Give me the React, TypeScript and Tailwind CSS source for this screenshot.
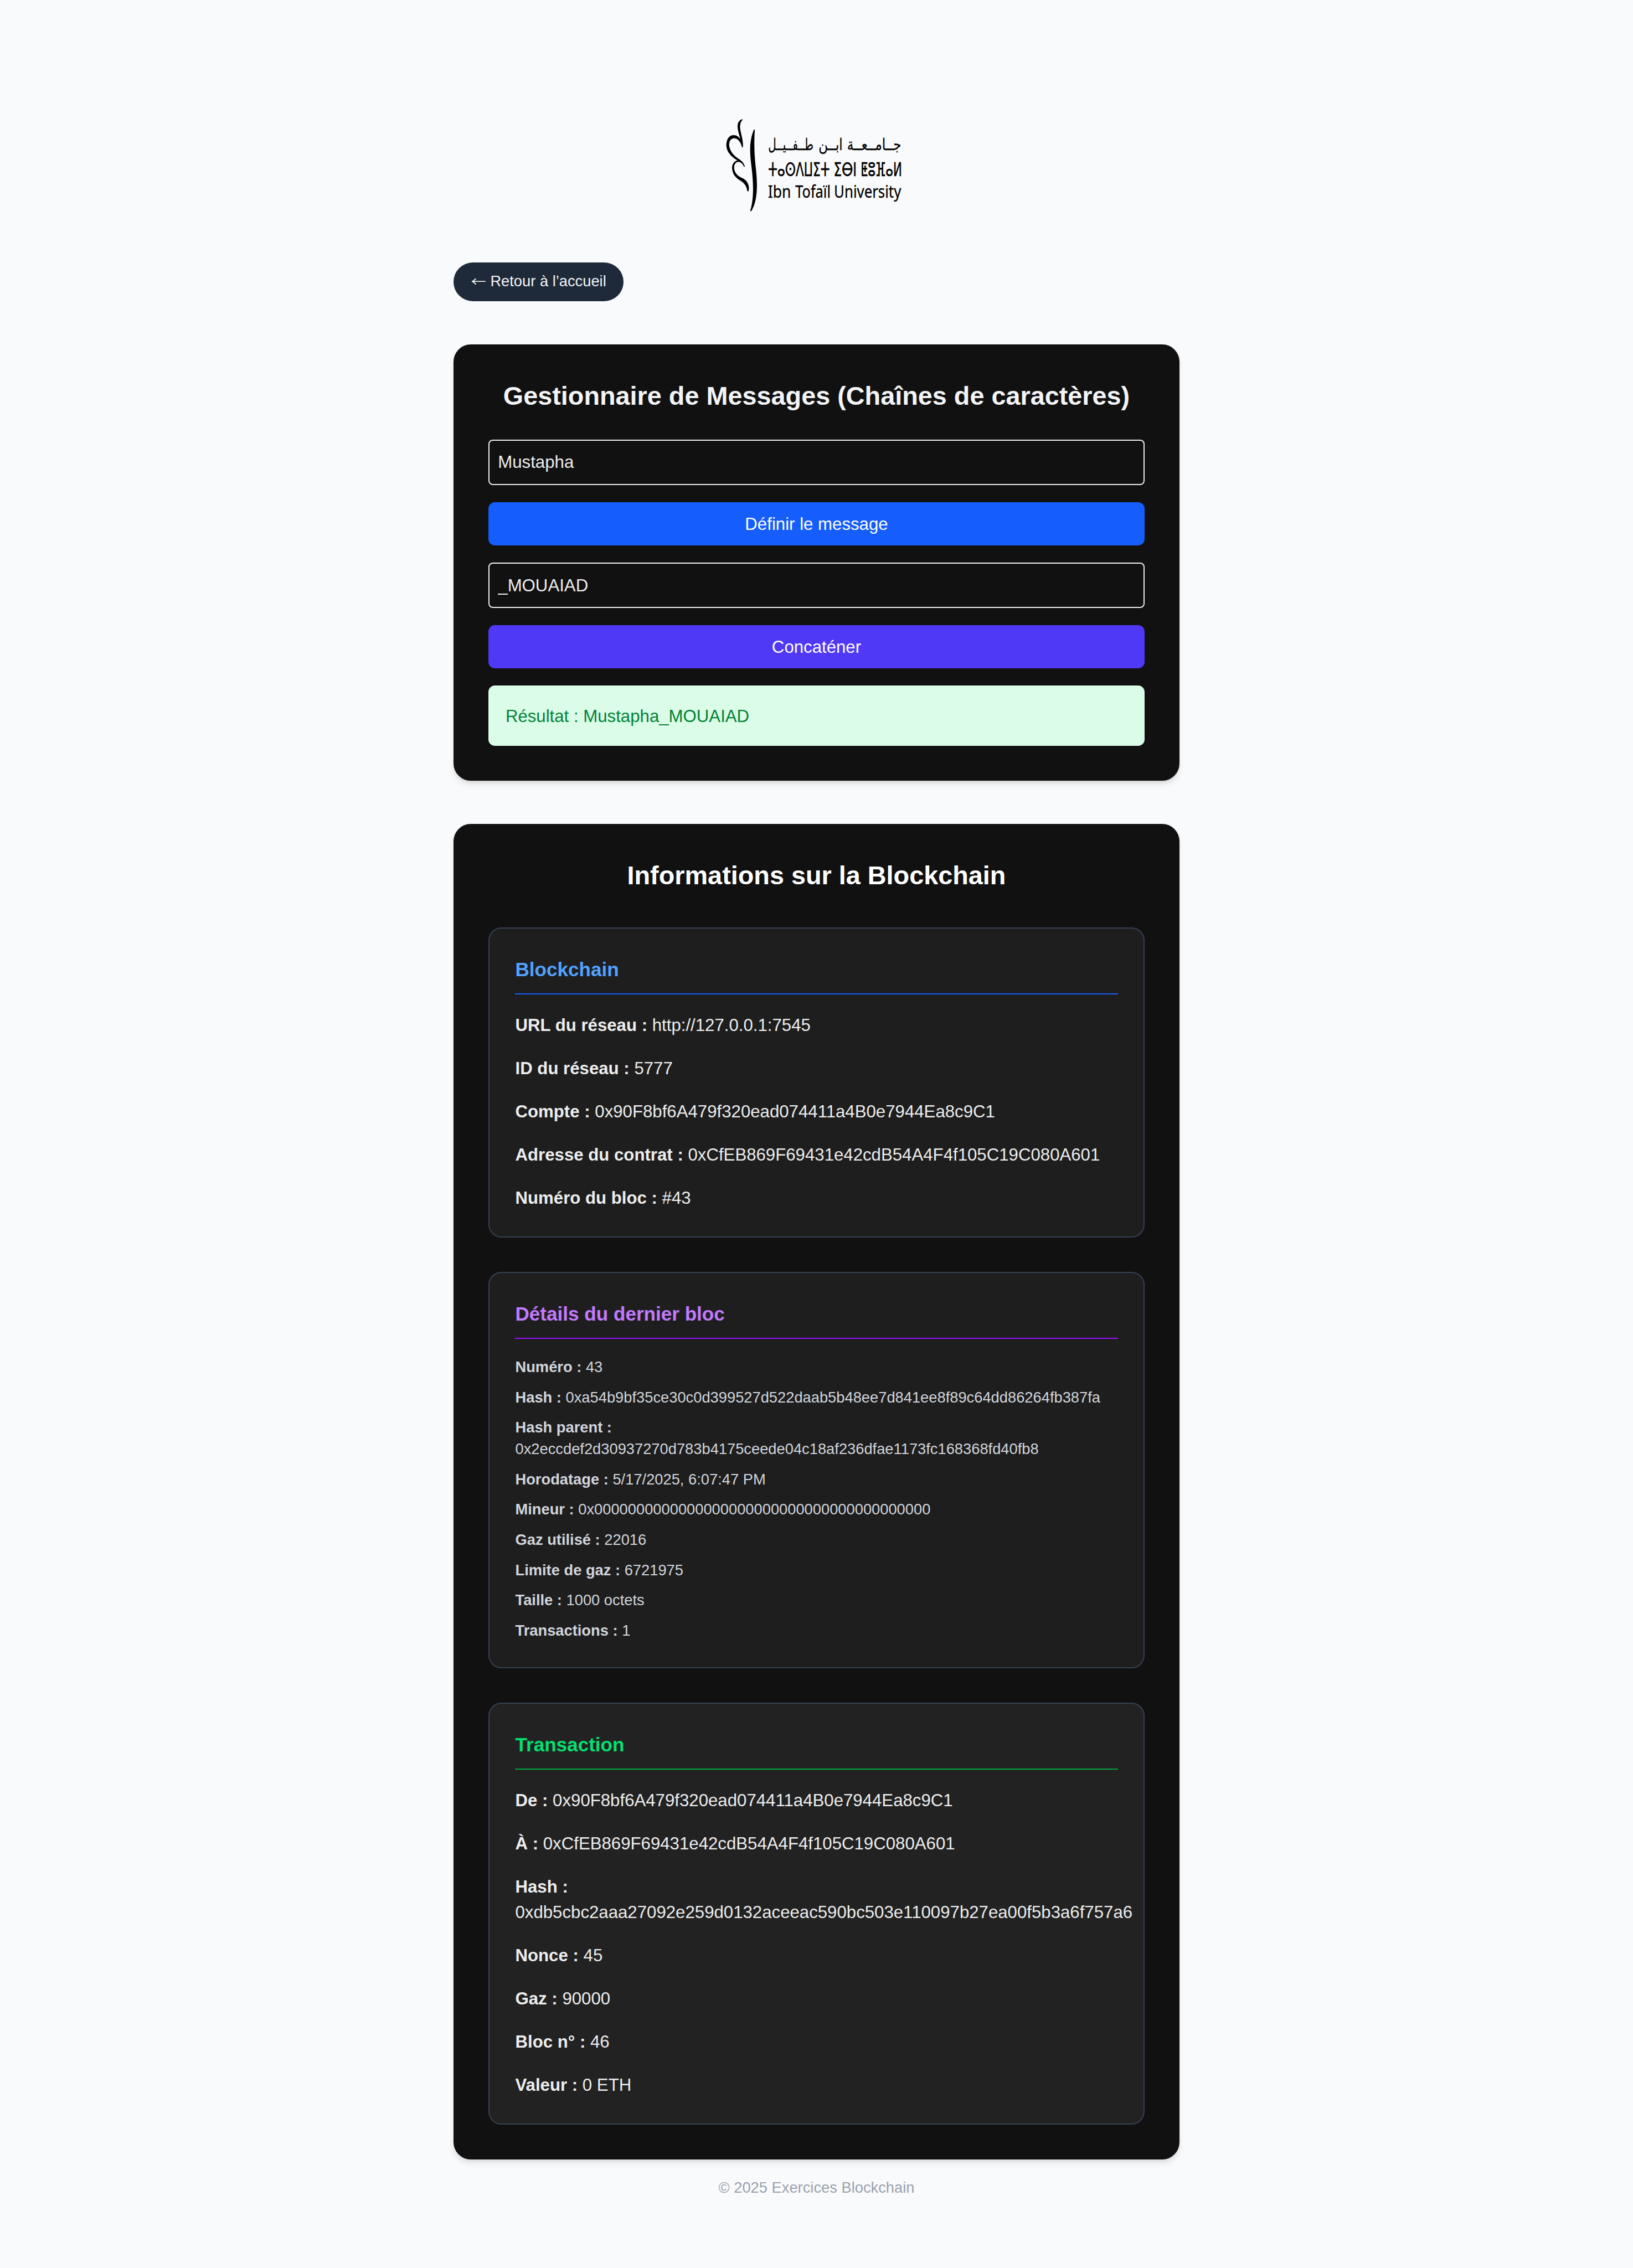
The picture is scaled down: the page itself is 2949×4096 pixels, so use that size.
import type { ReactNode } from "react";

const arabicWords = [
  { x: 1048, width: 301, text: "جــامــعــة" },
  { x: 722, width: 134, text: "ابــن" },
  { x: 560, width: 252, text: "طــفــيــل" },
];

const tifinaghWords = [
  { x: 308, width: 342, text: "ⵜⴰⵙⴷⵡⵉⵜ" },
  { x: 672, width: 128, text: "ⵉⴱⵏ" },
  { x: 822, width: 230, text: "ⵟⵓⴼⴰⵍ" },
];

const latinWords = [
  { x: 307, width: 128, text: "Ibn" },
  { x: 459, width: 196, text: "Tofaïl" },
  { x: 674, width: 373, text: "University" },
];

function Logo() {
  return (
    <svg viewBox="6 0 1140 630" className="h-[105px] w-[190px] overflow-visible" fill="#000">
      <path d="M164 62 C142 68 134 92 140 120 C143 140 150 155 154 174 C142 152 114 144 95 158 C74 176 70 212 84 240 C95 262 115 278 137 291 C112 300 103 322 110 350 C117 382 140 394 160 408 C180 422 190 440 192 462 L199 463 C207 430 192 403 166 390 C145 380 128 370 121 345 C115 320 124 301 142 299 C156 300 168 311 174 327 L179 325 C172 302 156 290 140 280 C115 262 97 240 92 212 C88 182 105 165 125 169 C145 173 157 195 163 219 L168 218 C170 190 163 165 157 138 C149 106 150 80 166 66 Z" />
      <path d="M229 119 L234 121 C230 180 230 240 238 320 C250 420 252 510 215 573 L208 573 C228 510 228 430 216 330 C204 240 204 180 229 119 Z" />
      <g fontFamily="'DejaVu Sans', sans-serif" fontSize="90" stroke="#000" strokeWidth="1">
        {arabicWords.map((w) => (
          <text key={w.text} x={w.x} y="234" direction="rtl" textLength={w.width} lengthAdjust="spacingAndGlyphs">
            {w.text}
          </text>
        ))}
      </g>
      <g fontFamily="'DejaVu Sans', sans-serif" fontSize="104" stroke="#000" strokeWidth="2">
        {tifinaghWords.map((w) => (
          <text key={w.text} x={w.x} y="379" textLength={w.width} lengthAdjust="spacingAndGlyphs">
            {w.text}
          </text>
        ))}
      </g>
      <g fontFamily="'Noto Sans', sans-serif" fontSize="96" stroke="#000" strokeWidth="1">
        {latinWords.map((w) => (
          <text key={w.text} x={w.x} y="499" textLength={w.width} lengthAdjust="spacingAndGlyphs">
            {w.text}
          </text>
        ))}
      </g>
    </svg>
  );
}

function Row({ label, children }: { label: string; children: ReactNode }) {
  return (
    <p>
      <strong className="font-semibold">{label} :</strong> {children}
    </p>
  );
}

const blockchain = [
  ["URL du réseau", "http://127.0.0.1:7545"],
  ["ID du réseau", "5777"],
  ["Compte", "0x90F8bf6A479f320ead074411a4B0e7944Ea8c9C1"],
  ["Adresse du contrat", "0xCfEB869F69431e42cdB54A4F4f105C19C080A601"],
  ["Numéro du bloc", "#43"],
];

const lastBlock = [
  ["Numéro", "43"],
  ["Hash", "0xa54b9bf35ce30c0d399527d522daab5b48ee7d841ee8f89c64dd86264fb387fa"],
  ["Hash parent", "0x2eccdef2d30937270d783b4175ceede04c18af236dfae1173fc168368fd40fb8"],
  ["Horodatage", "5/17/2025, 6:07:47 PM"],
  ["Mineur", "0x0000000000000000000000000000000000000000"],
  ["Gaz utilisé", "22016"],
  ["Limite de gaz", "6721975"],
  ["Taille", "1000 octets"],
  ["Transactions", "1"],
];

const transaction = [
  ["De", "0x90F8bf6A479f320ead074411a4B0e7944Ea8c9C1"],
  ["À", "0xCfEB869F69431e42cdB54A4F4f105C19C080A601"],
  ["Hash", "0xdb5cbc2aaa27092e259d0132aceeac590bc503e110097b27ea00f5b3a6f757a6"],
  ["Nonce", "45"],
  ["Gaz", "90000"],
  ["Bloc n°", "46"],
  ["Valeur", "0 ETH"],
];

export default function App() {
  return (
    <div className="flex h-[2100.5px] w-full flex-col items-center overflow-hidden bg-gray-50 pt-[100px] font-['Liberation_Sans',Arial,sans-serif] text-base text-[#ededed] [zoom:1.95]">
      <Logo />
      <main className="mt-[38px] flex w-2xl flex-col gap-10">
        <a className="self-start rounded-full bg-gray-800 px-4 py-2 text-sm text-gray-100">
          <span className="inline-block translate-y-px scale-y-85 font-['Noto_Sans_CJK_JP',sans-serif] leading-none">←</span>{" "}
          Retour à l’accueil
        </a>

        <section className="rounded-2xl bg-[#111] p-8 shadow-md">
          <h2 className="mb-6 text-center text-2xl font-bold text-gray-100">
            Gestionnaire de Messages (Chaînes de caractères)
          </h2>
          <div className="flex flex-col gap-4">
            <input className="w-full rounded border-[1.03px] border-[#ededed] px-2 pt-[8.6px] pb-[7.4px]" defaultValue="Mustapha" />
            <button className="rounded-md bg-blue-600 px-4 pt-[8.8px] pb-[7.2px] text-white">Définir le message</button>
            <input className="w-full rounded border-[1.03px] border-[#ededed] px-2 pt-[8.6px] pb-[7.4px]" defaultValue="_MOUAIAD" />
            <button className="rounded-md bg-indigo-600 px-4 pt-[8.8px] pb-[7.2px] text-white">Concaténer</button>
            <div className="rounded-md bg-green-100 px-4 pt-[16.8px] pb-[15.2px] text-green-700">Résultat : Mustapha_MOUAIAD</div>
          </div>
        </section>

        <section className="rounded-2xl bg-[#111] p-8 shadow-md">
          <h2 className="mb-8 text-center text-2xl font-bold text-white">Informations sur la Blockchain</h2>
          <div className="flex flex-col gap-8">
            <div className="rounded-xl border-[1.03px] border-gray-700 bg-[#1e1e1e] p-6">
              <h3 className="mb-4 border-b-[1.03px] border-blue-600 pb-2 text-lg font-semibold text-blue-400">Blockchain</h3>
              <div className="-mb-[0.8px] flex flex-col gap-4 pt-[0.8px]">
                {blockchain.map(([label, value]) => (
                  <Row key={label} label={label}>{value}</Row>
                ))}
              </div>
            </div>
            <div className="rounded-xl border-[1.03px] border-gray-700 bg-[#1e1e1e] p-6">
              <h3 className="mb-4 border-b-[1.03px] border-purple-600 pb-2 text-lg font-semibold text-purple-400">
                Détails du dernier bloc
              </h3>
              <div className="-mb-[0.5px] flex flex-col gap-2 pt-[0.5px] text-sm text-gray-300">
                {lastBlock.map(([label, value]) => (
                  <Row key={label} label={label}>{value}</Row>
                ))}
              </div>
            </div>
            <div className="rounded-xl border-[1.03px] border-gray-700 bg-[#222] p-6">
              <h3 className="mb-4 border-b-[1.03px] border-green-600 pb-2 text-lg font-semibold text-green-400">Transaction</h3>
              <div className="-mb-[0.8px] flex flex-col gap-4 pt-[0.8px]">
                {transaction.map(([label, value]) => (
                  <Row key={label} label={label}>{value}</Row>
                ))}
              </div>
            </div>
          </div>
        </section>
      </main>
      <footer className="mt-[16.5px] text-center text-sm text-gray-400">© 2025 Exercices Blockchain</footer>
    </div>
  );
}
